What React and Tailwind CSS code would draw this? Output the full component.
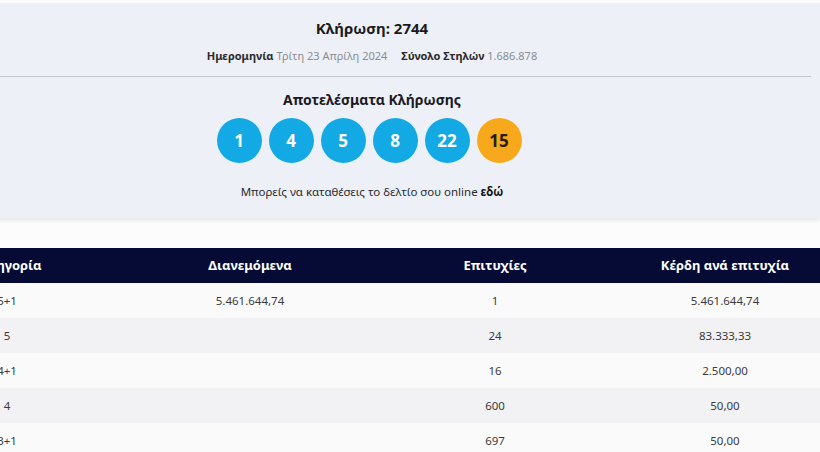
const balls = [
  { n: 1 },
  { n: 4 },
  { n: 5 },
  { n: 8 },
  { n: 22 },
  { n: 15, bonus: true },
]

const rows = [
  { cat: '5+1', pool: '5.461.644,74', wins: '1', prize: '5.461.644,74' },
  { cat: '5', pool: '', wins: '24', prize: '83.333,33' },
  { cat: '4+1', pool: '', wins: '16', prize: '2.500,00' },
  { cat: '4', pool: '', wins: '600', prize: '50,00' },
  { cat: '3+1', pool: '', wins: '697', prize: '50,00' },
]

const grid = 'grid grid-cols-[240px_246px_244px_216px]'

export default function App() {
  return (
    <div
      className="w-[820px] h-[452px] overflow-hidden bg-[#fcfcfd] pt-[3px]"
      style={{ fontFamily: '"Noto Sans", "DejaVu Sans", sans-serif' }}
    >
      {/* Draw summary card */}
      <div className="-ml-[76px] w-[896px] h-[215px] bg-[#edf0f7] shadow-[0_3px_4px_rgba(0,0,0,0.08)] px-[9px] flex flex-col items-center">
        <h2 className="mt-[15px] text-[15px] leading-[20px] font-bold text-[#1b1b1f]">Κλήρωση: 2744</h2>
        <p className="mt-[10px] text-[11px] leading-[16px] text-[#8a8d93]">
          <span className="font-bold text-[#2a2a2e]">Ημερομηνία</span> Τρίτη 23 Απρίλη 2024
          <span className="ml-[14px] font-bold text-[#2a2a2e]">Σύνολο Στηλών</span> 1.686.878
        </p>
        <div className="mt-[12px] w-full h-px bg-[#c4c7ce]" />
        <h3 className="mt-[14px] text-[14px] leading-[18px] font-bold text-[#1b1b1f]">Αποτελέσματα Κλήρωσης</h3>
        <div className="mt-[9px] mr-[6px] flex gap-[7px]">
          {balls.map(b => (
            <div
              key={b.n}
              className={`w-[45px] h-[45px] rounded-full flex items-center justify-center text-[17px] font-bold ${
                b.bonus ? 'bg-[#f8a91b] text-[#2a1d08]' : 'bg-[#13a9e4] text-white'
              }`}
            >
              {b.n}
            </div>
          ))}
        </div>
        <p className="mt-[21px] text-[11.5px] leading-[16px] text-[#2a2a2e]">
          Μπορείς να καταθέσεις το δελτίο σου online <span className="font-bold text-[#111]">εδώ</span>
        </p>
      </div>

      {/* Prize breakdown table */}
      <div className="mt-[30px] -ml-[113px] w-[946px]">
        <div className={`${grid} h-[35px] items-center bg-[#050b35] text-white text-[13px] font-bold text-center`}>
          <div>Κατηγορία</div>
          <div>Διανεμόμενα</div>
          <div>Επιτυχίες</div>
          <div>Κέρδη ανά επιτυχία</div>
        </div>
        {rows.map((r, i) => (
          <div
            key={r.cat}
            className={`${grid} h-[35px] items-center text-[11.5px] text-[#3a3a3e] text-center ${
              i % 2 ? 'bg-[#f2f2f4]' : 'bg-[#fafafb]'
            }`}
          >
            <div>{r.cat}</div>
            <div>{r.pool}</div>
            <div>{r.wins}</div>
            <div>{r.prize}</div>
          </div>
        ))}
      </div>
    </div>
  )
}
